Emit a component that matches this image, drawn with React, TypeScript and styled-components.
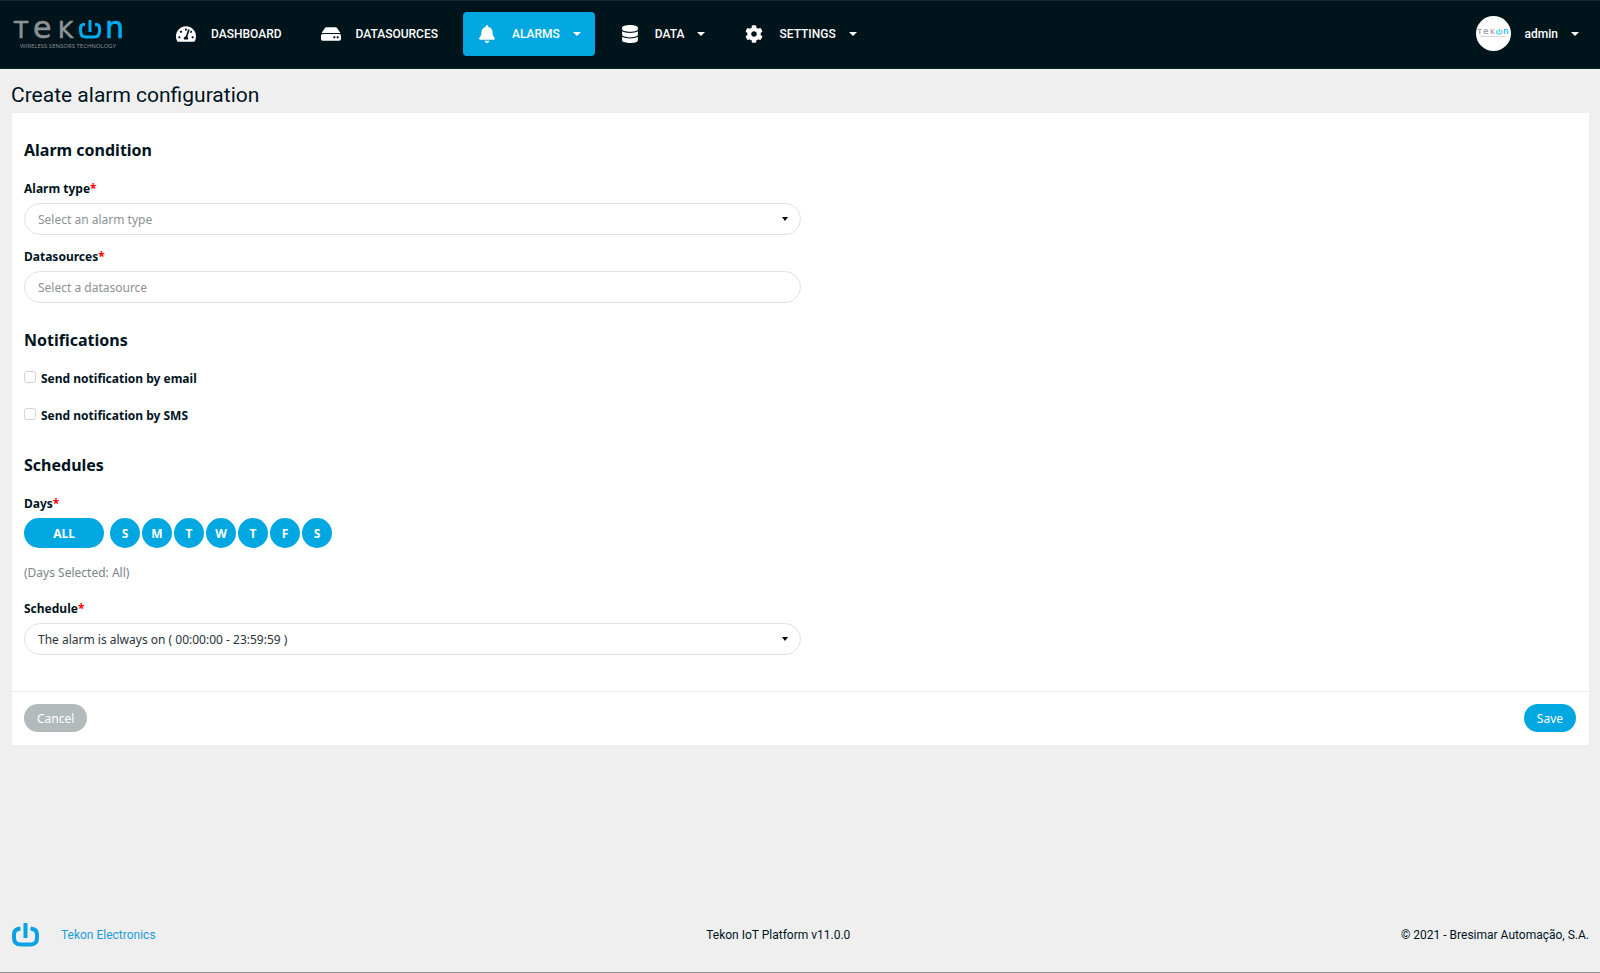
import React, { useState } from "react";
import styled, { createGlobalStyle } from "styled-components";
import { FaBell, FaCog, FaDatabase, FaHdd, FaTachometerAlt } from "react-icons/fa";

const BLUE = "#00a7e1";
const INK = "#00141e";

const GlobalStyle = createGlobalStyle`
  * { box-sizing: border-box; }
  body {
    margin: 0;
    background: #efefef;
    color: ${INK};
    font-family: Roboto, "Liberation Sans", sans-serif;
    font-size: 12px;
  }
  button, input, select { font: inherit; }
`;

const Page = styled.div`
  display: flex;
  flex-direction: column;
  min-height: 100vh;
  border-bottom: 1px solid #8c8f90;
`;

const Header = styled.header`
  display: flex;
  align-items: center;
  height: 69px;
  padding: 0 21px 2px 11px;
  background: #00141b;
  border-top: 1px solid #14272f;
  border-bottom: 1px solid #10232b;
`;

const Brand = styled.a`
  display: block;
  width: 151px;
  height: 44px;
`;

const Nav = styled.nav`
  display: flex;
  gap: 11px;
  flex: 1;
`;

const NavItem = styled.button<{ $active?: boolean }>`
  display: flex;
  align-items: center;
  height: 44px;
  padding: 0 14px;
  border: 0;
  border-radius: 4px;
  background: ${(p) => (p.$active ? BLUE : "transparent")};
  color: #fff;
  font-weight: 500;
  text-decoration: none;
  cursor: pointer;
`;

const NavIcon = styled.span`
  display: flex;
  justify-content: center;
  width: 20px;
  margin-right: 15px;
`;

const Caret = styled.span`
  width: 0;
  height: 0;
  margin-left: 13px;
  border: 4px solid transparent;
  border-top-color: currentColor;
  border-bottom: 0;
`;

const UserButton = styled.button`
  display: flex;
  align-items: center;
  padding: 0;
  border: 0;
  background: none;
  color: #fff;
  font-weight: 500;
  cursor: pointer;
`;

const Avatar = styled.span`
  display: flex;
  align-items: center;
  justify-content: center;
  width: 35px;
  height: 35px;
  margin-right: 14px;
  border-radius: 50%;
  background: #fff;
`;

const Title = styled.h1`
  margin: 0;
  padding: 13px 11px 5px;
  font-size: 21px;
  font-weight: 400;
  line-height: 26px;
`;

const Card = styled.form`
  margin: 0 11px 0 12px;
  background: #fff;
  font-family: "Noto Sans", "Open Sans", sans-serif;
`;

const CardBody = styled.div`
  padding: 25px 12px 36px;
`;

const Section = styled.section`
  width: 50%;
  margin-bottom: 25px;
  &:last-child { margin-bottom: 0; }
`;

const SectionTitle = styled.h2`
  margin: 0 0 17px;
  font-size: 16px;
  font-weight: 700;
  line-height: 24px;
`;

const Field = styled.div`
  margin-bottom: 12px;
  &:last-child { margin-bottom: 0; }
`;

const labelText = `
  font-size: 12px;
  font-weight: 700;
  line-height: 20px;
`;

const Label = styled.label`
  display: block;
  margin-bottom: 4px;
  ${labelText}
`;

const Required = styled.span`
  color: #ff0000;
`;

const Control = styled.div`
  position: relative;
  color: #000;
`;

const SelectCaret = styled(Caret)`
  position: absolute;
  top: 14px;
  right: 13px;
  border-width: 4px 3px 0;
  pointer-events: none;
`;

const controlBox = `
  display: block;
  width: 100%;
  height: 32px;
  padding: 0 13px;
  border: 1px solid #dfe3e8;
  border-radius: 16px;
  background: #fff;
  appearance: none;
  font-size: 12px;
`;

const Select = styled.select<{ $empty?: boolean }>`
  ${controlBox}
  color: ${(p) => (p.$empty ? "#8d9293" : "#2a3338")};
`;

const TextInput = styled.input`
  ${controlBox}
  color: #2a3338;
  &::placeholder { color: #8d9293; opacity: 1; }
`;

const CheckRow = styled.label`
  display: flex;
  align-items: center;
  gap: 5px;
  margin-bottom: 17px;
  ${labelText}
  &:last-child { margin-bottom: 27px; }
`;

const Checkbox = styled.input`
  appearance: none;
  width: 12px;
  height: 12px;
  margin: 0 0 4px;
  border: 1px solid #cfd4d5;
  border-radius: 3px;
  background: #fff;
  &:checked { background: ${BLUE}; border-color: ${BLUE}; }
`;

const Days = styled.div`
  display: flex;
  gap: 2px;
`;

const DayButton = styled.button<{ $wide?: boolean; $on: boolean }>`
  width: ${(p) => (p.$wide ? "80px" : "30px")};
  height: 30px;
  margin-right: ${(p) => (p.$wide ? "4px" : "0")};
  padding: 0;
  border: 0;
  border-radius: 15px;
  background: ${(p) => (p.$on ? BLUE : "#b4babc")};
  color: #fff;
  font-size: 12px;
  font-weight: 700;
  cursor: pointer;
`;

const Hint = styled.p`
  margin: 15px 0 16px;
  color: #7c8486;
  font-size: 12px;
  line-height: 20px;
`;

const CardFooter = styled.div`
  display: flex;
  justify-content: space-between;
  padding: 12px 13px 13px 12px;
  border-top: 1px solid #ececec;
`;

const PillButton = styled.button<{ $primary?: boolean }>`
  height: 28px;
  padding: 0 13px;
  border: 0;
  border-radius: 14px;
  background: ${(p) => (p.$primary ? BLUE : "#b3babc")};
  color: #fff;
  font-size: 12px;
  cursor: pointer;
`;

const Footer = styled.footer`
  display: flex;
  justify-content: space-between;
  align-items: center;
  margin-top: auto;
  padding: 0 11px 25px 12px;
`;

const FooterLink = styled.a`
  display: flex;
  align-items: center;
  gap: 22px;
  color: #1a9cd8;
  text-decoration: none;
`;

function Logo({ width, tone }: { width: number; tone: string }) {
  return (
    <svg width={width} viewBox="0 -8 114 44" overflow="visible" role="img" aria-label="Tekon">
      <g fill={tone} fontFamily="DejaVu Sans">
        <g stroke={tone} strokeWidth="0.6">
          <text x="3" y="18" fontSize="23">T</text>
          <text x="22" y="18" fontSize="30">e</text>
          <text x="47" y="18" fontSize="23">K</text>
        </g>
        <text x="9" y="28" fontFamily="Open Sans" fontSize="6">WIRELESS SENSORS TECHNOLOGY</text>
      </g>
      <text x="94" y="18" fontSize="30" fontFamily="DejaVu Sans" fill="#00aeef" stroke="#00aeef" strokeWidth="0.6">n</text>
      <path
        d="M74 4.500H73Q69.500 4.500 69.500 8V11Q69.500 17 75 17H83Q88.500 17 88.500 11V8Q88.500 4.500 85 4.500H84M79 0V12"
        fill="none"
        stroke="#00aeef"
        strokeWidth="3"
      />
    </svg>
  );
}

function PowerMark() {
  return (
    <svg width="27" height="24" viewBox="0 0 27 24" fill="none" stroke="#0aa2e3" strokeWidth="4" aria-hidden="true">
      <path d="M8.500 5.500C4 6 2 8 2 11V15Q2 21.500 9 21.500H18Q25 21.500 25 15V11C25 8 23 6 18.500 5.500M13.500 0V15" />
    </svg>
  );
}

const DAY_LETTERS = ["S", "M", "T", "W", "T", "F", "S"];
const DAY_NAMES = ["Sunday", "Monday", "Tuesday", "Wednesday", "Thursday", "Friday", "Saturday"];

export default function App() {
  const [days, setDays] = useState<boolean[]>(DAY_LETTERS.map(() => true));
  const all = days.every(Boolean);
  const chosen = all ? "All" : DAY_NAMES.filter((_, i) => days[i]).join(", ") || "None";

  return (
    <Page>
      <GlobalStyle />
      <Header>
        <Brand href="#"><Logo width={114} tone="#8f9193" /></Brand>
        <Nav>
          <NavItem as="a" href="#dashboard">
            <NavIcon><FaTachometerAlt size={20} /></NavIcon>DASHBOARD
          </NavItem>
          <NavItem as="a" href="#datasources">
            <NavIcon><FaHdd size={20} /></NavIcon>DATASOURCES
          </NavItem>
          <NavItem $active>
            <NavIcon><FaBell size={18} /></NavIcon>ALARMS<Caret />
          </NavItem>
          <NavItem>
            <NavIcon><FaDatabase size={18} /></NavIcon>DATA<Caret />
          </NavItem>
          <NavItem>
            <NavIcon><FaCog size={18} /></NavIcon>SETTINGS<Caret />
          </NavItem>
        </Nav>
        <UserButton>
          <Avatar><Logo width={32} tone="#8f9193" /></Avatar>admin<Caret />
        </UserButton>
      </Header>

      <Title>Create alarm configuration</Title>

      <Card onSubmit={(e: React.FormEvent) => e.preventDefault()}>
        <CardBody>
          <Section>
            <SectionTitle>Alarm condition</SectionTitle>
            <Field>
              <Label htmlFor="alarm-type">Alarm type<Required>*</Required></Label>
              <Control>
                <Select id="alarm-type" $empty>
                  <option>Select an alarm type</option>
                </Select>
                <SelectCaret />
              </Control>
            </Field>
            <Field>
              <Label htmlFor="datasource">Datasources<Required>*</Required></Label>
              <TextInput id="datasource" placeholder="Select a datasource" />
            </Field>
          </Section>

          <Section>
            <SectionTitle>Notifications</SectionTitle>
            <CheckRow><Checkbox type="checkbox" />Send notification by email</CheckRow>
            <CheckRow><Checkbox type="checkbox" />Send notification by SMS</CheckRow>
          </Section>

          <Section>
            <SectionTitle>Schedules</SectionTitle>
            <Label as="div" id="days-label">Days<Required>*</Required></Label>
            <Days role="group" aria-labelledby="days-label">
              <DayButton type="button" $wide $on={all} onClick={() => setDays(days.map(() => !all))}>ALL</DayButton>
              {DAY_LETTERS.map((letter, i) => (
                <DayButton
                  key={DAY_NAMES[i]}
                  type="button"
                  $on={days[i]}
                  aria-pressed={days[i]}
                  onClick={() => setDays(days.map((d, j) => (j === i ? !d : d)))}
                >
                  {letter}
                </DayButton>
              ))}
            </Days>
            <Hint>(Days Selected: {chosen})</Hint>
            <Field>
              <Label htmlFor="schedule">Schedule<Required>*</Required></Label>
              <Control>
                <Select id="schedule">
                  <option>The alarm is always on ( 00:00:00 - 23:59:59 )</option>
                </Select>
                <SelectCaret />
              </Control>
            </Field>
          </Section>
        </CardBody>
        <CardFooter>
          <PillButton type="button">Cancel</PillButton>
          <PillButton type="submit" $primary>Save</PillButton>
        </CardFooter>
      </Card>

      <Footer>
        <FooterLink href="#tekon"><PowerMark />Tekon Electronics</FooterLink>
        <span>Tekon IoT Platform v11.0.0</span>
        <span>© 2021 - Bresimar Automação, S.A.</span>
      </Footer>
    </Page>
  );
}
